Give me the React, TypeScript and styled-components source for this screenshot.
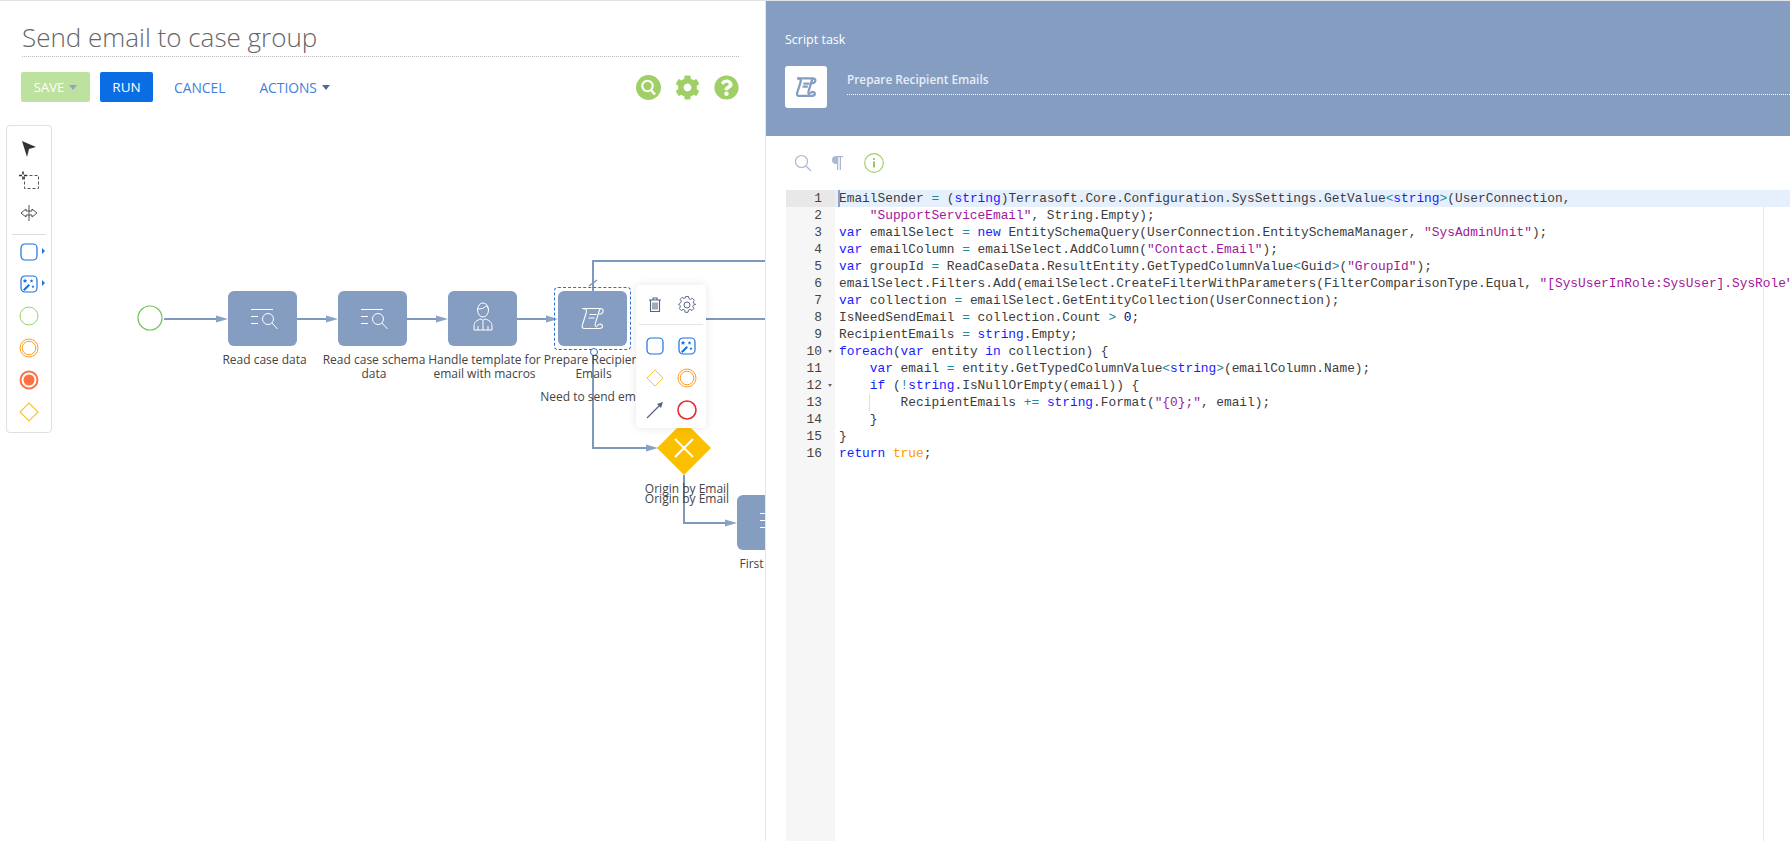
import React from 'react'
import styled, { createGlobalStyle } from 'styled-components'
import { FaCog, FaQuestionCircle } from 'react-icons/fa'

const CANVAS_TOP = 112
const codeLines = [
  'EmailSender = (string)Terrasoft.Core.Configuration.SysSettings.GetValue<string>(UserConnection,',
  '    "SupportServiceEmail", String.Empty);',
  'var emailSelect = new EntitySchemaQuery(UserConnection.EntitySchemaManager, "SysAdminUnit");',
  'var emailColumn = emailSelect.AddColumn("Contact.Email");',
  'var groupId = ReadCaseData.ResultEntity.GetTypedColumnValue<Guid>("GroupId");',
  'emailSelect.Filters.Add(emailSelect.CreateFilterWithParameters(FilterComparisonType.Equal, "[SysUserInRole:SysUser].SysRole", groupId));',
  'var collection = emailSelect.GetEntityCollection(UserConnection);',
  'IsNeedSendEmail = collection.Count > 0;',
  'RecipientEmails = string.Empty;',
  'foreach(var entity in collection) {',
  '    var email = entity.GetTypedColumnValue<string>(emailColumn.Name);',
  '    if (!string.IsNullOrEmpty(email)) {',
  '        RecipientEmails += string.Format("{0};", email);',
  '    }',
  '}',
  'return true;',
]

const GlobalStyle = createGlobalStyle`
  html, body {
    margin: 0;
    padding: 0;
    background: #fff;
  }
  body {
    font-family: "Open Sans", "Liberation Sans", sans-serif;
  }
`

const highlight = (line: string) => {
  const re = /("[^"]*")|\b(var|new|foreach|in|if|return|string)\b|\b(true)\b|\b(\d+)\b|(\+=|[=<>!])/g
  const out: React.ReactNode[] = []
  let last = 0
  let m: RegExpExecArray | null
  while ((m = re.exec(line))) {
    if (m.index > last) out.push(line.slice(last, m.index))
    const kind = m[1] ? 'str' : m[2] ? 'kw' : m[3] ? 'bool' : m[4] ? 'num' : 'op'
    out.push(<Styled.Token key={m.index} $kind={kind}>{m[0]}</Styled.Token>)
    last = m.index + m[0].length
  }
  out.push(line.slice(last))
  return out
}

const Arrow = ({ x, y }: { x: number; y: number }) => (
  <polygon points={`${x},${y} ${x - 12},${y - 3.5} ${x - 12},${y + 3.5}`} fill="#8aa2c6" />
)

const SearchTaskIcon = () => (
  <svg width="69" height="55" viewBox="0 0 69 55" fill="none" stroke="#fff" strokeWidth="1">
    <path d="M23 18.5h22M23 25.5h7M23 32.5h7" />
    <circle cx="40" cy="28" r="5.5" />
    <path d="M44 32l5.5 6" />
  </svg>
)

const UserTaskIcon = () => (
  <svg width="69" height="55" viewBox="0 0 69 55" fill="none" stroke="#fff" strokeWidth="1">
    <ellipse cx="35" cy="19" rx="5.500" ry="7" />
    <path d="M29.500 18c3 0 7-.5 9-3.500.5 1.500 1.500 2.500 2 3.500" />
    <path d="M26 39v-4c0-4 3-6 7-7l2 1.500 2-1.500c4 1 7 3 7 7v4z" />
    <path d="M30 39v-4M40 39v-4M35 30v9" />
  </svg>
)

const ScrollGlyph = ({ color, weight = 1.1, size = 24 }: { color: string; weight?: number; size?: number }) => (
  <svg width={size} height={size} viewBox="0 0 24 24" fill="none" stroke={color} strokeWidth={weight}>
    <path d="M1.500 1.500h18c2.500 0 3.200 2 2.200 4-.6 1.200-2 1.700-3.700 1.500" />
    <path d="M19.500 1.500c-1 1-1.200 2-1.800 3.800l-3.500 11.500c-.5 1.800.5 3 2 3.200" />
    <path d="M1.500 1.500c1.500 0 4 .5 4 2.500 0 1-.3 2-.8 3.500l-3.500 11c-.5 1.800.5 3 2 3h15c2 0 3.300-1.200 3.300-2.500 0-1.500-1.500-2-3-1.800-1.500.2-2 1-2 2" />
    <path d="M8.500 7.500h7M7.500 11h6" />
  </svg>
)

const WandIcon = ({ size }: { size: number }) => (
  <svg width={size} height={size} viewBox="0 0 18 18">
    <rect x="1" y="1" width="16" height="16" rx="4" fill="#fff" stroke="#1a73e0" strokeWidth="1.2" />
    <path d="M3 14.500l5.500-5.500 1.500 1.500-5.500 5.500z" fill="#1a73e0" />
    <path d="M5 3.500l.7 1.500 1.500.3-1.100 1 .3 1.500-1.400-.8-1.400.8.3-1.500-1-1 1.500-.3zM11.500 4l.6 1.200 1.300.2-1 .9.2 1.300-1.100-.6-1.100.6.2-1.300-.9-.9 1.300-.2zM13 10l.5 1 1 .2-.8.7.2 1.100-.9-.5-.9.500.2-1.100-.8-.7 1.100-.2z" fill="#1a73e0" />
  </svg>
)

const RoundedTaskIcon = ({ size }: { size: number }) => (
  <svg width={size} height={size} viewBox="0 0 18 18">
    <rect x="1" y="1" width="16" height="16" rx="4" fill="#fff" stroke="#1a73e0" strokeWidth="1.200" />
  </svg>
)

const DiamondIcon = ({ size }: { size: number }) => (
  <svg width={size} height={size} viewBox="0 0 20 20">
    <path d="M10 1l9 9-9 9-9-9z" fill="#fff" stroke="#fbc02d" strokeWidth="1.100" />
  </svg>
)

const CircleIcon = ({ color, width }: { color: string; width: number }) => (
  <svg width="20" height="20" viewBox="0 0 20 20">
    <circle cx="10" cy="10" r="9" fill="none" stroke={color} strokeWidth={width} />
  </svg>
)

const DoubleCircleIcon = () => (
  <svg width="20" height="20" viewBox="0 0 20 20" fill="none" stroke="#ff9d1e" strokeWidth="1">
    <circle cx="10" cy="10" r="9" />
    <circle cx="10" cy="10" r="6.800" />
  </svg>
)

const EndIcon = () => (
  <svg width="20" height="20" viewBox="0 0 20 20">
    <circle cx="10" cy="10" r="8.500" fill="none" stroke="#ff7043" strokeWidth="2" />
    <circle cx="10" cy="10" r="5.500" fill="#ff7043" />
  </svg>
)

const GearOutline = () => (
  <svg width="18" height="18" viewBox="0 0 18 18" fill="none" stroke="#55647f" strokeWidth="1">
    <circle cx="9" cy="9" r="3" />
    <path d="M7.500 1h3l.5 2.300 1.700.8 2-1.200 2 2.100-1.200 2 .7 1.600L18 9.500v0l-2.300.6-.7 1.600 1.200 2-2 2.100-2-1.200-1.700.8-.5 2.300h-3l-.5-2.300-1.700-.8-2 1.200-2-2.100 1.200-2-.7-1.600L0 9.500v0l2.300-1.900.7-1.600-1.200-2 2-2.100 2 1.200 1.700-.8z" transform="translate(.5 -.5) scale(.95)" />
  </svg>
)

export default function App() {
  return (
    <Styled.Page>
      <GlobalStyle />
      <Styled.Designer>
        <Styled.Title>Send email to case group</Styled.Title>
        <Styled.ActionBar>
          <Styled.SaveButton>
            SAVE
            <Styled.Caret $color="#8fa4c8" />
          </Styled.SaveButton>
          <Styled.RunButton>RUN</Styled.RunButton>
          <Styled.LinkButton $left={21}>CANCEL</Styled.LinkButton>
          <Styled.LinkButton $left={34}>
            ACTIONS
            <Styled.Caret $color="#4f6a9c" />
          </Styled.LinkButton>
          <Styled.IconGroup>
            <svg width="25" height="25" viewBox="0 0 25 25">
              <circle cx="12.500" cy="12.500" r="12.500" fill="#9fcf66" />
              <circle cx="11.500" cy="11" r="5.200" fill="none" stroke="#fff" strokeWidth="2" />
              <path d="M15 15l4 4.500" stroke="#fff" strokeWidth="2.400" />
            </svg>
            <FaCog size={25} color="#9fcf66" />
            <FaQuestionCircle size={25} color="#9fcf66" />
          </Styled.IconGroup>
        </Styled.ActionBar>

        <Styled.Canvas>
          <Styled.Wires width="766" height="729" viewBox={`0 ${CANVAS_TOP} 766 729`}>
            <g fill="none" stroke="#7f98bd" strokeWidth="2">
              <path d="M164 320H218M297 320H328M407 320H438M517 320H548" />
              <path d="M593 292V262H766M706 320H766" />
              <path d="M593 351V449H648M684 476V524H728" />
              <path d="M589 287l8-6" strokeWidth="1.500" />
            </g>
            <Arrow x={228} y={320} />
            <Arrow x={338} y={320} />
            <Arrow x={448} y={320} />
            <Arrow x={558} y={320} />
            <Arrow x={658} y={449} />
            <Arrow x={737} y={524} />
            <circle cx="150" cy="319" r="12" fill="#fff" stroke="#6cc456" strokeWidth="1.200" />
            <polygon points="684,422 711,449 684,476 657,449" fill="#fbc000" />
            <path d="M675 440l18 18M693 440l-18 18" stroke="#fff" strokeWidth="2" />
          </Styled.Wires>

          <Styled.Node $x={228} $y={292}><SearchTaskIcon /></Styled.Node>
          <Styled.Node $x={338} $y={292}><SearchTaskIcon /></Styled.Node>
          <Styled.Node $x={448} $y={292}><UserTaskIcon /></Styled.Node>
          <Styled.Node $x={558} $y={292}><ScrollGlyph color="#fff" /></Styled.Node>
          <Styled.Node $x={737} $y={496}><SearchTaskIcon /></Styled.Node>
          <Styled.Selection />
          <Styled.Handle />

          <Styled.Label $x={264.500} $y={354}>Read case data</Styled.Label>
          <Styled.Label $x={374} $y={354}>Read case schema<br />data</Styled.Label>
          <Styled.Label $x={484.500} $y={354}>Handle template for<br />email with macros</Styled.Label>
          <Styled.Label $x={593.500} $y={354}>Prepare Recipient<br />Emails</Styled.Label>
          <Styled.Label $x={597} $y={391}>Need to send email?</Styled.Label>
          <Styled.Label $x={687} $y={483}>Origin by Email</Styled.Label>
          <Styled.Label $x={687} $y={493}>Origin by Email</Styled.Label>
          <Styled.Label $x={751.500} $y={558}>First</Styled.Label>

          <Styled.Palette>
            <Styled.PaletteItem>
              <svg width="18" height="18" viewBox="0 0 18 18"><path d="M2 1l14 6-7 2-2 8z" fill="#333" /></svg>
            </Styled.PaletteItem>
            <Styled.PaletteItem>
              <svg width="20" height="20" viewBox="0 0 20 20" fill="none">
                <path d="M5.500 4.500h14v13h-14z" stroke="#555" strokeDasharray="3 2" />
                <path d="M0 4.500h8M4 0.500v8" stroke="#333" strokeWidth="1.600" strokeDasharray="3 2" />
              </svg>
            </Styled.PaletteItem>
            <Styled.PaletteItem>
              <svg width="18" height="18" viewBox="0 0 18 18" fill="none" stroke="#555">
                <path d="M9 1v16" />
                <path d="M6 5L1 9l5 4v-2h6v2l5-4-5-4v2H6z" />
              </svg>
            </Styled.PaletteItem>
            <Styled.PaletteRule />
            <Styled.PaletteItem $more><RoundedTaskIcon size={18} /></Styled.PaletteItem>
            <Styled.PaletteItem $more><WandIcon size={18} /></Styled.PaletteItem>
            <Styled.PaletteItem><CircleIcon color="#9ad56b" width={1} /></Styled.PaletteItem>
            <Styled.PaletteItem><DoubleCircleIcon /></Styled.PaletteItem>
            <Styled.PaletteItem><EndIcon /></Styled.PaletteItem>
            <Styled.PaletteItem><DiamondIcon size={20} /></Styled.PaletteItem>
          </Styled.Palette>

          <Styled.ContextMenu>
            <Styled.MenuTop>
              <svg width="14" height="16" viewBox="0 0 14 16" fill="none" stroke="#55647f" strokeWidth="1.100">
                <path d="M1 3h12M5 3V1h4v2M2.500 3v11.500h9V3M5 5.500v7M7 5.500v7M9 5.500v7" />
              </svg>
              <GearOutline />
            </Styled.MenuTop>
            <Styled.MenuGrid>
              <RoundedTaskIcon size={18} />
              <WandIcon size={18} />
              <DiamondIcon size={18} />
              <DoubleCircleIcon />
              <svg width="18" height="18" viewBox="0 0 18 18">
                <path d="M1 17L14 4" stroke="#55647f" strokeWidth="1.300" />
                <path d="M17 1l-6 2 4 4z" fill="#55647f" />
              </svg>
              <CircleIcon color="#e8292e" width={1.600} />
            </Styled.MenuGrid>
          </Styled.ContextMenu>
        </Styled.Canvas>
      </Styled.Designer>

      <Styled.Inspector>
        <Styled.InspectorHead>
          <Styled.Kind>Script task</Styled.Kind>
          <Styled.NameRow>
            <Styled.KindIcon><ScrollGlyph color="#849dc1" weight={2.600} size={21} /></Styled.KindIcon>
            <Styled.NameField>Prepare Recipient Emails</Styled.NameField>
          </Styled.NameRow>
        </Styled.InspectorHead>

        <Styled.EditorTools>
          <svg width="18" height="18" viewBox="0 0 18 18" fill="none" stroke="#a9b9d0" strokeWidth="1.200">
            <circle cx="7.500" cy="7.500" r="6" />
            <path d="M12 12l5 5" />
          </svg>
          <svg width="14" height="16" viewBox="0 0 14 16">
            <path d="M6 1H5a4 4 0 0 0 0 8h1v6h1.300V2.300h1.400V15H10V2.300h2V1z" fill="#a9b9d0" />
          </svg>
          <svg width="20" height="20" viewBox="0 0 20 20">
            <circle cx="10" cy="10" r="9.300" fill="none" stroke="#9fcf66" strokeWidth="1.200" />
            <path d="M10 8.500v6M10 5v1.800" stroke="#7dbb45" strokeWidth="1.600" />
          </svg>
        </Styled.EditorTools>

        <Styled.Editor>
          <Styled.Gutter>
            {codeLines.map((_, i) => (
              <Styled.GutterCell key={i} $active={i === 0} $fold={i === 9 || i === 11}>{i + 1}</Styled.GutterCell>
            ))}
          </Styled.Gutter>
          <Styled.Code>
            <Styled.PrintMargin />
            {codeLines.map((line, i) => (
              <Styled.CodeLine key={i} $active={i === 0} $guide={i === 12}>{highlight(line)}</Styled.CodeLine>
            ))}
          </Styled.Code>
        </Styled.Editor>
      </Styled.Inspector>
    </Styled.Page>
  )
}

const tokenColors: Record<string, string> = {
  str: '#a0189a',
  kw: '#1a1aff',
  bool: '#ff9800',
  num: '#00008b',
  op: '#1c8a9c',
}

const Styled = {
  Page: styled.div`
    display: flex;
    width: 1790px;
    height: 841px;
    overflow: hidden;
    border-top: 1px solid #dfe3e8;
    box-sizing: border-box;
  `,
  Designer: styled.div`
    display: flex;
    flex-direction: column;
    width: 766px;
    flex: none;
    box-sizing: border-box;
    border-right: 1px solid #e6e6e6;
  `,
  Title: styled.div`
    box-sizing: border-box;
    height: 56px;
    margin: 0 26px 0 22px;
    padding-top: 18px;
    border-bottom: 1px dotted #bbb;
    font-size: 26px;
    font-weight: 300;
    line-height: 36px;
    color: #666;
  `,
  ActionBar: styled.div`
    display: flex;
    align-items: center;
    height: 30px;
    margin: 15px 26px 0 21px;
  `,
  SaveButton: styled.div`
    display: flex;
    align-items: center;
    justify-content: center;
    width: 69px;
    height: 30px;
    border-radius: 2px;
    background: #bde29f;
    color: #fff;
    font-size: 13px;
  `,
  RunButton: styled.div`
    display: flex;
    align-items: center;
    justify-content: center;
    width: 53px;
    height: 30px;
    margin-left: 10px;
    border-radius: 2px;
    background: #0a6de4;
    color: #fff;
    font-size: 13.500px;
  `,
  LinkButton: styled.div<{ $left: number }>`
    display: flex;
    align-items: center;
    margin-left: ${p => p.$left}px;
    color: #3f7fe0;
    font-size: 13.800px;
  `,
  Caret: styled.span<{ $color: string }>`
    width: 0;
    height: 0;
    margin-left: 5px;
    border-left: 4.5px solid transparent;
    border-right: 4.5px solid transparent;
    border-top: 5px solid ${p => p.$color};
  `,
  IconGroup: styled.div`
    display: flex;
    gap: 14px;
    margin-left: auto;
  `,
  Canvas: styled.div`
    position: relative;
    flex: 1;
    margin-top: 9px;
    overflow: hidden;
  `,
  Wires: styled.svg`
    position: absolute;
    left: 0;
    top: 0;
  `,
  Node: styled.div<{ $x: number; $y: number }>`
    position: absolute;
    left: ${p => p.$x}px;
    top: ${p => p.$y - CANVAS_TOP}px;
    display: flex;
    align-items: center;
    justify-content: center;
    width: 69px;
    height: 55px;
    border-radius: 6px;
    background: #849dc1;
  `,
  Selection: styled.div`
    position: absolute;
    left: 554px;
    top: ${288 - CANVAS_TOP}px;
    width: 77px;
    height: 63px;
    box-sizing: border-box;
    border: 1px dashed #2c6fd6;
    border-radius: 4px;
  `,
  Handle: styled.div`
    position: absolute;
    left: 590px;
    top: ${349 - CANVAS_TOP}px;
    width: 6px;
    height: 6px;
    border: 1px solid #2c6fd6;
    border-radius: 50%;
    background: #fff;
  `,
  Label: styled.div<{ $x: number; $y: number }>`
    position: absolute;
    left: ${p => p.$x}px;
    top: ${p => p.$y - CANVAS_TOP}px;
    transform: translateX(-50%);
    font-size: 12px;
    line-height: 14px;
    color: #444;
    text-align: center;
    white-space: nowrap;
  `,
  Palette: styled.div`
    position: absolute;
    left: 6px;
    top: ${126 - CANVAS_TOP}px;
    display: flex;
    flex-direction: column;
    box-sizing: border-box;
    width: 46px;
    height: 308px;
    padding-top: 7px;
    border: 1px solid #e0e0e0;
    border-radius: 4px;
    background: #fff;
  `,
  PaletteItem: styled.div<{ $more?: boolean }>`
    position: relative;
    display: flex;
    align-items: center;
    justify-content: center;
    flex: none;
    height: 32px;
    ${p => p.$more && `
      &::after {
        content: '';
        position: absolute;
        right: 6px;
        top: 12px;
        border-left: 3px solid #1a73e0;
        border-top: 3px solid transparent;
        border-bottom: 3px solid transparent;
      }
    `}
  `,
  PaletteRule: styled.div`
    flex: none;
    height: 1px;
    margin: 5px 5px 1px;
    background: #ddd;
  `,
  ContextMenu: styled.div`
    position: absolute;
    left: 636px;
    top: ${286 - CANVAS_TOP}px;
    box-sizing: border-box;
    width: 70px;
    height: 143px;
    padding: 0 3px;
    border-radius: 4px;
    background: #fff;
    box-shadow: 0 0 10px rgba(0, 0, 0, 0.1);
  `,
  MenuTop: styled.div`
    display: grid;
    grid-template-columns: 1fr 1fr;
    align-items: center;
    justify-items: center;
    height: 39px;
    border-bottom: 1px solid #e4e4e4;
  `,
  MenuGrid: styled.div`
    display: grid;
    grid-template-columns: 1fr 1fr;
    grid-auto-rows: 32px;
    align-items: center;
    justify-items: center;
    padding-top: 5px;
  `,
  Inspector: styled.div`
    display: flex;
    flex-direction: column;
    flex: 1;
    min-width: 0;
  `,
  InspectorHead: styled.div`
    box-sizing: border-box;
    height: 135px;
    padding: 30px 0 0 19px;
    background: #849dc1;
    color: #fff;
  `,
  Kind: styled.div`
    font-size: 12.500px;
    line-height: 18px;
    color: #fff;
  `,
  NameRow: styled.div`
    display: flex;
    gap: 20px;
    margin-top: 17px;
  `,
  KindIcon: styled.div`
    display: flex;
    align-items: center;
    justify-content: center;
    flex: none;
    width: 42px;
    height: 42px;
    border-radius: 3px;
    background: #fff;
  `,
  NameField: styled.div`
    flex: 1;
    height: 28px;
    border-bottom: 1px dotted #fff;
    font-size: 11.800px;
    font-weight: 600;
    line-height: 26px;
    color: #e9eef5;
  `,
  EditorTools: styled.div`
    display: flex;
    align-items: center;
    gap: 19px;
    height: 54px;
    padding-left: 28px;
  `,
  Editor: styled.div`
    display: flex;
    flex: 1;
    margin-left: 20px;
    min-height: 0;
    font-family: "Liberation Mono", "DejaVu Sans Mono", monospace;
    font-size: 12.830px;
    line-height: 17px;
  `,
  Gutter: styled.div`
    flex: none;
    width: 49px;
    background: #f6f6f6;
    color: #444;
  `,
  GutterCell: styled.div<{ $active: boolean; $fold: boolean }>`
    position: relative;
    height: 17px;
    padding-right: 13px;
    text-align: right;
    background: ${p => (p.$active ? '#e8e8e8' : 'transparent')};
    ${p => p.$fold && `
      &::after {
        content: '';
        position: absolute;
        right: 3px;
        top: 7px;
        border-top: 3px solid #666;
        border-left: 2.5px solid transparent;
        border-right: 2.5px solid transparent;
      }
    `}
  `,
  Code: styled.div`
    position: relative;
    flex: 1;
    min-width: 0;
    overflow: hidden;
    color: #3c3c3c;
  `,
  CodeLine: styled.div<{ $active: boolean; $guide: boolean }>`
    position: relative;
    height: 17px;
    padding-left: 4px;
    white-space: pre;
    background: ${p => (p.$active ? '#e6f0fc' : 'transparent')};
    ${p => p.$active && `
      &::before {
        content: '';
        position: absolute;
        left: 3px;
        top: 0;
        width: 2px;
        height: 17px;
        background: #8fa3bd;
      }
    `}
    ${p => p.$guide && `
      &::before {
        content: '';
        position: absolute;
        left: 34px;
        top: 0;
        width: 1px;
        height: 17px;
        background: #ddd;
      }
    `}
  `,
  Token: styled.span<{ $kind: string }>`
    color: ${p => tokenColors[p.$kind]};
  `,
  PrintMargin: styled.div`
    position: absolute;
    left: 928px;
    top: 17px;
    bottom: 0;
    width: 1px;
    background: #e8e8e8;
  `,
}
